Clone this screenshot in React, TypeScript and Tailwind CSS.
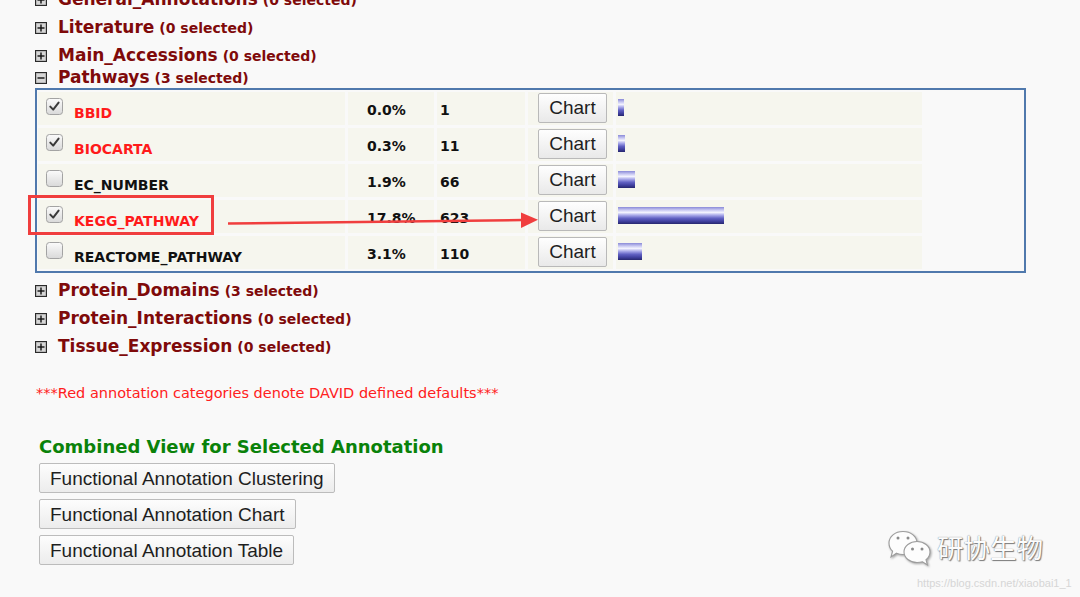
import React from "react";

type Row = {
  name: string;
  red: boolean;
  checked: boolean;
  pct: string;
  count: string;
  bar: number;
};

const rows: Row[] = [
  { name: "BBID", red: true, checked: true, pct: "0.0%", count: "1", bar: 6 },
  { name: "BIOCARTA", red: true, checked: true, pct: "0.3%", count: "11", bar: 7 },
  { name: "EC_NUMBER", red: false, checked: false, pct: "1.9%", count: "66", bar: 17 },
  { name: "KEGG_PATHWAY", red: true, checked: true, pct: "17.8%", count: "623", bar: 106 },
  { name: "REACTOME_PATHWAY", red: false, checked: false, pct: "3.1%", count: "110", bar: 24 },
];

function ToggleBox({ open }: { open?: boolean }) {
  return (
    <svg width="12" height="12" viewBox="0 0 12 12" className="shrink-0">
      <rect x="0.5" y="0.5" width="11" height="11" fill="#9a9a9a" stroke="#2a2a2a" />
      <rect x="1.5" y="1.5" width="9" height="9" fill="#d6d6d6" />
      <line x1="2.5" y1="6" x2="9.5" y2="6" stroke="#111" strokeWidth="1.4" />
      {!open && <line x1="6" y1="2.5" x2="6" y2="9.5" stroke="#111" strokeWidth="1.4" />}
    </svg>
  );
}

function CheckBox({ checked }: { checked: boolean }) {
  return (
    <svg width="17" height="17" viewBox="0 0 17 17" className="shrink-0">
      <defs>
        <linearGradient id="cbg" x1="0" y1="0" x2="0" y2="1">
          <stop offset="0" stopColor="#fbfbfb" />
          <stop offset="1" stopColor="#d9d9d9" />
        </linearGradient>
      </defs>
      <rect x="0.5" y="0.5" width="16" height="16" rx="3" fill="url(#cbg)" stroke="#a3a3a3" />
      {checked && (
        <path d="M4.3 8.6 L7.2 11.6 L12.6 4.6" fill="none" stroke="#3a3a3a" strokeWidth="2" strokeLinecap="round" strokeLinejoin="round" />
      )}
    </svg>
  );
}

function Heading({ name, count, open, className = "h-7" }: { name: string; count: number; open?: boolean; className?: string }) {
  return (
    <div className={`flex items-center pl-[35px] ${className}`}>
      <ToggleBox open={open} />
      <span className="ml-[11px] whitespace-nowrap text-[#7f0a0a]">
        <span className="text-[17px] font-bold">{name}</span>
        <span className="ml-[5px] text-[14px] font-bold">({count} selected)</span>
      </span>
    </div>
  );
}

export default function App() {
  const cell = "h-[33px] bg-[#f6f6ee]";
  return (
    <div className="relative h-[597px] w-[1080px] overflow-hidden bg-[#f9f9f9] font-['DejaVu_Sans',Verdana,sans-serif]">
      <div className="-mt-[14px]">
        <Heading name="General_Annotations" count={0} />
        <Heading name="Literature" count={0} />
        <Heading name="Main_Accessions" count={0} />
        <Heading name="Pathways" count={3} open className="-mt-[2px] h-5" />
      </div>

      <div className="ml-[35px] w-[991px] border-2 border-[#5079ad] px-px py-[2px]">
        <div className="grid grid-cols-[307px_86px_88px_85px_306px] gap-[3px]">
          {rows.map((r) => (
            <React.Fragment key={r.name}>
              <div className={`${cell} flex items-start`}>
                <div className="ml-[8px] mt-[6px]">
                  <CheckBox checked={r.checked} />
                </div>
                <span
                  className={`ml-[11px] mt-[13px] text-[14px] font-bold leading-[16px] ${r.red ? "text-[#ff1a1a]" : "text-[#111]"}`}
                >
                  {r.name}
                </span>
              </div>
              <div className={`${cell} pl-[19px] pt-[11px] text-[14px] font-bold leading-[15px] text-[#111]`}>{r.pct}</div>
              <div className={`${cell} pl-[3px] pt-[11px] text-[14px] font-bold leading-[15px] text-[#111]`}>{r.count}</div>
              <div className={cell}>
                <button className="ml-[10px] mt-px flex h-[30px] w-[69px] items-center justify-center rounded-[2px] border border-[#b9b9b9] bg-[linear-gradient(#fefefe,#e9e9e9)] font-['Liberation_Sans',Arial,sans-serif] text-[19px] text-[#1e1e1e]">
                  Chart
                </button>
              </div>
              <div className={cell}>
                <div
                  className="ml-[2px] mt-[7px] h-[17px] bg-[linear-gradient(to_bottom,#8a8ad8_0%,#c9c9f2_18%,#f3f3ff_32%,#aaaaea_48%,#6262c4_66%,#40409f_84%,#26266e_100%)]"
                  style={{ width: r.bar }}
                />
              </div>
            </React.Fragment>
          ))}
        </div>
      </div>

      <div className="mt-1">
        <Heading name="Protein_Domains" count={3} />
        <Heading name="Protein_Interactions" count={0} />
        <Heading name="Tissue_Expression" count={0} />
      </div>

      <p className="ml-[36px] mt-[23px] text-[14.5px] leading-[18px] text-[#ff2020]">
        ***Red annotation categories denote DAVID defined defaults***
      </p>

      <h3 className="ml-[39px] mt-[35px] text-[18px] font-bold leading-[20px] text-[#0a820a]">
        Combined View for Selected Annotation
      </h3>

      <div className="ml-[39px] mt-[6px] flex flex-col items-start gap-[6px] font-['Liberation_Sans',Arial,sans-serif]">
        {["Functional Annotation Clustering", "Functional Annotation Chart", "Functional Annotation Table"].map((t) => (
          <button
            key={t}
            className="h-[30px] rounded-[2px] border border-[#bcbcbc] bg-[linear-gradient(#fdfdfd,#ececec)] px-[10px] text-[19px] leading-none text-[#1e1e1e]"
          >
            {t}
          </button>
        ))}
      </div>

      {/* annotation highlight over KEGG row */}
      <div className="absolute left-[28px] top-[195px] h-[40px] w-[186px] border-[3px] border-[#f03e3e]" />
      <svg className="pointer-events-none absolute left-0 top-0" width="1080" height="597">
        <line x1="228" y1="223.5" x2="523" y2="220" stroke="#f03e3e" strokeWidth="2.5" />
        <polygon points="521,212.5 538,219.8 521,228" fill="#f03e3e" />
      </svg>

      {/* watermark */}
      <svg
        className="absolute left-[885px] top-[528px] drop-shadow-[1px_1px_1px_rgba(0,0,0,0.35)]"
        width="50"
        height="40"
        viewBox="0 0 50 40"
      >
        <path d="M18 3.5 C26 3.5 32 8.5 32 15 C32 21.5 26 26.5 18 26.5 C15.5 26.5 13.5 26 11.5 25.2 L6 29 L7.6 23.2 C5 21 4 18.2 4 15 C4 8.5 10 3.5 18 3.5 Z" fill="#fdfdfd" stroke="#9c9c9c" strokeWidth="1.1" />
        <path d="M32 13.5 C39 13.5 45 18 45 24 C45 27 43.5 29.8 41 31.8 L42.5 37 L37.5 33.8 C35.8 34.3 34 34.5 32 34.5 C25 34.5 19 30 19 24 C19 18 25 13.5 32 13.5 Z" fill="#fdfdfd" stroke="#9c9c9c" strokeWidth="1.1" />
        <circle cx="13" cy="10" r="1.5" fill="#8a8a8a" />
        <circle cx="23" cy="10" r="1.5" fill="#8a8a8a" />
        <circle cx="27.5" cy="21" r="1.5" fill="#8a8a8a" />
        <circle cx="37" cy="21" r="1.5" fill="#8a8a8a" />
      </svg>
      <div className="absolute left-[937px] top-[531px] font-['Noto_Sans_CJK_SC',sans-serif] text-[26.5px] leading-[32px] text-[#fcfcfc] [text-shadow:1px_1px_1px_#7a7a7a,0_0_1px_#666]">
        研协生物
      </div>
      <div className="absolute left-[917px] top-[576px] font-['Liberation_Sans',Arial,sans-serif] text-[11px] leading-[14px] text-[#d6d6d6]">
        https://blog.csdn.net/xiaobai1_1
      </div>
    </div>
  );
}
